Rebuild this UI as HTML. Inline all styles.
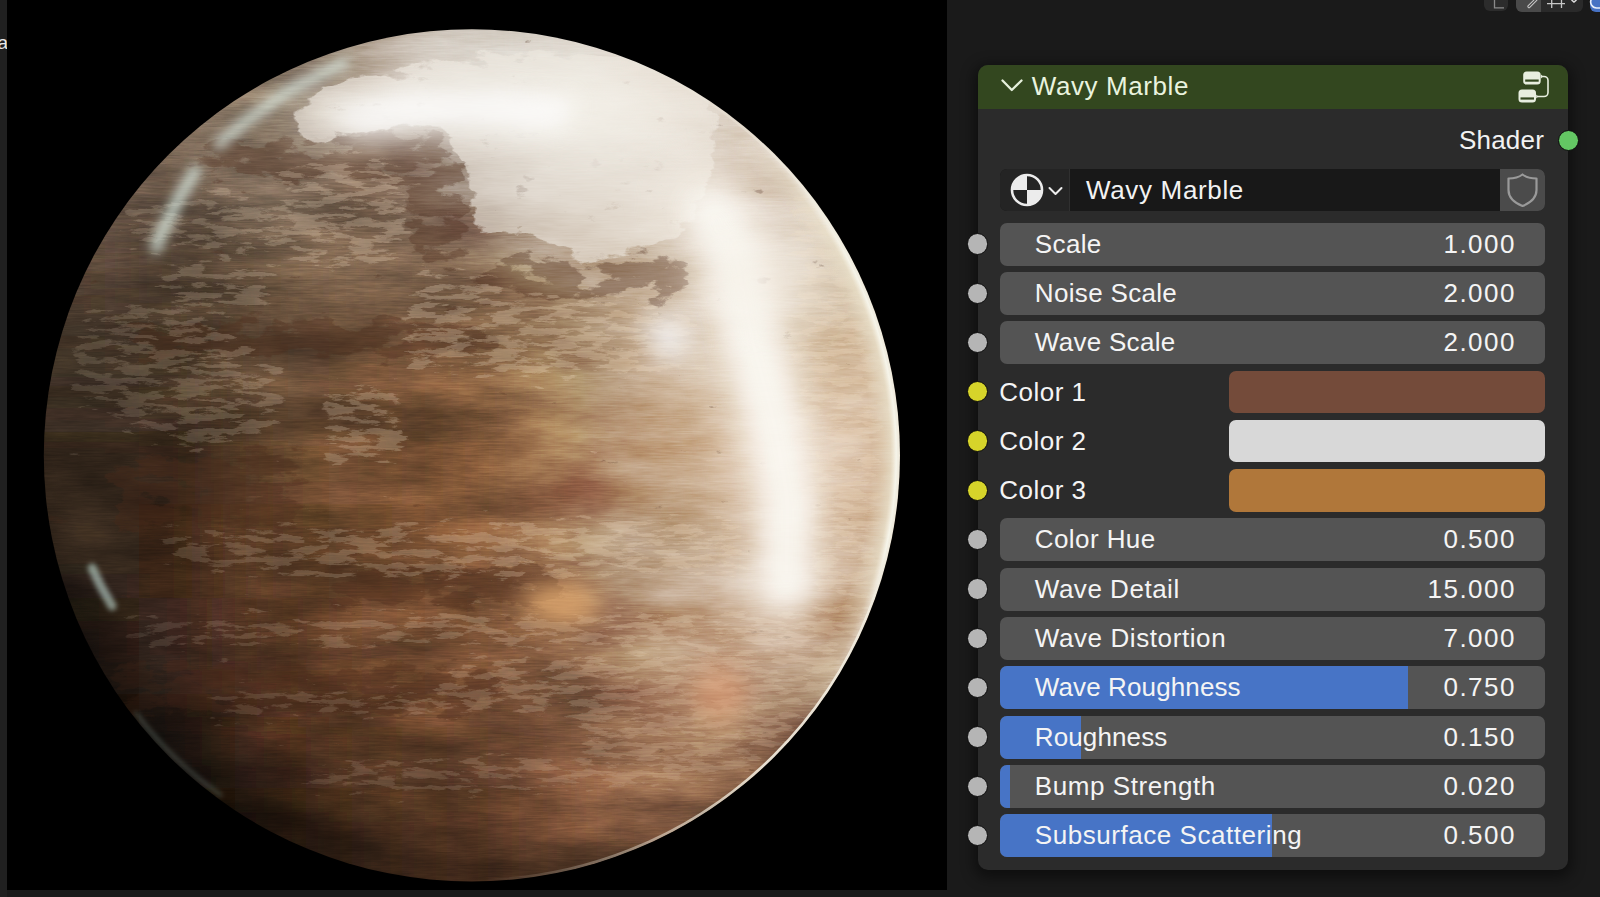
<!DOCTYPE html>
<html><head><meta charset="utf-8">
<style>
*{margin:0;padding:0;box-sizing:border-box}
html,body{width:1600px;height:897px;overflow:hidden;background:#1a1a1a;font-family:"Liberation Sans",sans-serif;color:#f2f2f2}
.abs{position:absolute}
#lstrip{position:absolute;left:0;top:0;width:7px;height:897px;background:#202020;overflow:hidden}
#lstrip span{position:absolute;left:-12px;top:33.4px;font-size:19px;color:#e8e8e8;line-height:20px}
#vp{position:absolute;left:7px;top:0;width:940px;height:890px;background:#000;overflow:hidden}
#node{position:absolute;left:978px;top:65px;width:590px;height:805px;border-radius:10px;background:#2b2b2b;box-shadow:0 4px 14px 4px rgba(0,0,0,0.45)}
#hdr{position:absolute;left:978px;top:65px;width:590px;height:44px;border-radius:10px 10px 0 0;background:#33471f}
.txt{position:absolute;font-size:26px;line-height:43px;white-space:nowrap}
.sock{position:absolute;left:967.1px;width:21.4px;height:21.4px;border-radius:50%;border:1.4px solid #0c0c0c}
.sock.g{background:#b5b5b5}
.sock.y{background:#d6d42a}
.sl{position:absolute;left:1000px;width:545px;height:43px;border-radius:7px;background:#545454;overflow:hidden}
.fill{position:absolute;left:0;top:0;height:43px;background:#4774c6}
.lb{position:absolute;left:34.8px;top:0;font-size:26px;line-height:43px;white-space:nowrap;color:#f4f4f4}
.vl{position:absolute;right:29.2px;top:0;font-size:26px;line-height:43px;white-space:nowrap;color:#f4f4f4;letter-spacing:1.45px}
.clb{position:absolute;left:999.3px;height:43px;font-size:26px;line-height:43px;white-space:nowrap;color:#f4f4f4}
.sw{position:absolute;left:1229px;width:316px;height:42.5px;border-radius:7px}
</style></head><body>
<div id="vp">
<svg width="940" height="890" style="position:absolute;left:0;top:0;filter:saturate(1.1)">
 <defs>
  <clipPath id="sph"><ellipse cx="464.9" cy="455.4" rx="428.1" ry="426.1"/></clipPath>
  <filter id="bl" filterUnits="userSpaceOnUse" x="-100" y="-100" width="1140" height="1090"><feGaussianBlur stdDeviation="36"/></filter>
  <filter id="b2" filterUnits="userSpaceOnUse" x="-50" y="-50" width="1040" height="990"><feGaussianBlur stdDeviation="2.5"/></filter>
  <filter id="b6" filterUnits="userSpaceOnUse" x="-50" y="-50" width="1040" height="990"><feGaussianBlur stdDeviation="6"/></filter>
  <filter id="b12" filterUnits="userSpaceOnUse" x="-50" y="-50" width="1040" height="990"><feGaussianBlur stdDeviation="12"/></filter>
  <filter id="b20" filterUnits="userSpaceOnUse" x="-50" y="-50" width="1040" height="990"><feGaussianBlur stdDeviation="20"/></filter>
  <filter id="mottleL" filterUnits="userSpaceOnUse" x="0" y="0" width="940" height="890" color-interpolation-filters="sRGB">
   <feGaussianBlur in="SourceAlpha" stdDeviation="8" result="m"/>
   <feTurbulence type="fractalNoise" baseFrequency="0.035 0.14" numOctaves="6" seed="7" result="n"/>
   <feColorMatrix in="n" type="matrix" values="0 0 0 0 0  0 0 0 0 0  0 0 0 0 0  1 0 0 0 0" result="na"/>
   <feComposite in="m" in2="na" operator="arithmetic" k1="0" k2="0.55" k3="1.5" k4="-1.0" result="s"/>
   <feComponentTransfer in="s" result="t"><feFuncA type="linear" slope="8" intercept="-2.0"/></feComponentTransfer>
   <feFlood flood-color="#eedcc4" flood-opacity="0.3"/>
   <feComposite in2="t" operator="in"/>
  </filter>
  <filter id="mottleD" filterUnits="userSpaceOnUse" x="0" y="0" width="940" height="890" color-interpolation-filters="sRGB">
   <feGaussianBlur in="SourceAlpha" stdDeviation="8" result="m"/>
   <feTurbulence type="fractalNoise" baseFrequency="0.03 0.07" numOctaves="6" seed="21" result="n"/>
   <feColorMatrix in="n" type="matrix" values="0 0 0 0 0  0 0 0 0 0  0 0 0 0 0  1 0 0 0 0" result="na"/>
   <feComposite in="m" in2="na" operator="arithmetic" k1="0" k2="0.7" k3="1.5" k4="-0.95" result="s"/>
   <feComponentTransfer in="s" result="t"><feFuncA type="linear" slope="8" intercept="-2.0"/></feComponentTransfer>
   <feFlood flood-color="#4a2c1e" flood-opacity="0.35"/>
   <feComposite in2="t" operator="in"/>
  </filter>
  <filter id="mottleW" filterUnits="userSpaceOnUse" x="0" y="0" width="940" height="890" color-interpolation-filters="sRGB">
   <feGaussianBlur in="SourceAlpha" stdDeviation="7" result="m"/>
   <feTurbulence type="fractalNoise" baseFrequency="0.03 0.07" numOctaves="6" seed="13" result="n"/>
   <feColorMatrix in="n" type="matrix" values="0 0 0 0 0  0 0 0 0 0  0 0 0 0 0  1 0 0 0 0" result="na"/>
   <feComposite in="m" in2="na" operator="arithmetic" k1="0" k2="1.0" k3="1.2" k4="-0.95" result="s"/>
   <feComponentTransfer in="s" result="t"><feFuncA type="linear" slope="8" intercept="-2.0"/></feComponentTransfer>
   <feFlood flood-color="#ece7df" flood-opacity="0.6"/>
   <feComposite in2="t" operator="in"/>
  </filter>
  <filter id="tex" filterUnits="userSpaceOnUse" x="0" y="0" width="940" height="890" color-interpolation-filters="sRGB">
   <feTurbulence type="fractalNoise" baseFrequency="0.008 0.025" numOctaves="5" seed="3" result="n"/>
   <feColorMatrix in="n" type="matrix" values="1 0 0 0 0  1 0 0 0 0  1 0 0 0 0  0 0 0 0 1" result="g"/>
   <feComponentTransfer in="g"><feFuncR type="linear" slope="1.8" intercept="-0.4"/><feFuncG type="linear" slope="1.8" intercept="-0.4"/><feFuncB type="linear" slope="1.8" intercept="-0.4"/></feComponentTransfer>
  </filter>
  <filter id="streak" filterUnits="userSpaceOnUse" x="0" y="0" width="940" height="890" color-interpolation-filters="sRGB">
   <feTurbulence type="fractalNoise" baseFrequency="0.04 0.6" numOctaves="3" seed="5" result="n"/>
   <feColorMatrix in="n" type="matrix" values="1 0 0 0 0  1 0 0 0 0  1 0 0 0 0  0 0 0 0 1" result="g"/>
   <feComponentTransfer in="g"><feFuncR type="linear" slope="1.5" intercept="-0.25"/><feFuncG type="linear" slope="1.5" intercept="-0.25"/><feFuncB type="linear" slope="1.5" intercept="-0.25"/></feComponentTransfer>
  </filter>
  <radialGradient id="limb" cx="0.5882978723404255" cy="0.3707865168539326" r="0.62" gradientUnits="objectBoundingBox">
   <stop offset="0.75" stop-color="#000" stop-opacity="0"/>
   <stop offset="0.9" stop-color="#000" stop-opacity="0.0"/>
   <stop offset="1" stop-color="#000" stop-opacity="0.35"/>
  </radialGradient>
  <radialGradient id="rim" cx="464.9" cy="455.4" r="427.2" gradientUnits="userSpaceOnUse">
   <stop offset="0.935" stop-color="#e6dcc8" stop-opacity="0"/>
   <stop offset="0.98" stop-color="#e8e0cc" stop-opacity="0.8"/>
   <stop offset="0.993" stop-color="#f6f4ea" stop-opacity="1"/>
   <stop offset="1" stop-color="#f0eee4" stop-opacity="1"/>
  </radialGradient>
  <radialGradient id="rimmask" cx="898" cy="400" r="340" gradientUnits="userSpaceOnUse">
   <stop offset="0.45" stop-color="#fff" stop-opacity="1"/>
   <stop offset="1" stop-color="#fff" stop-opacity="0"/>
  </radialGradient>
  <radialGradient id="thing" cx="853" cy="520" r="520" gradientUnits="userSpaceOnUse">
   <stop offset="0.5" stop-color="#fff" stop-opacity="1"/>
   <stop offset="1" stop-color="#fff" stop-opacity="0"/>
  </radialGradient>
  <mask id="thinm"><rect x="0" y="0" width="940" height="890" fill="url(#thing)"/></mask>
  <radialGradient id="litg" cx="673" cy="230" r="760" gradientUnits="userSpaceOnUse">
   <stop offset="0" stop-color="#fff" stop-opacity="1"/>
   <stop offset="0.45" stop-color="#fff" stop-opacity="0.85"/>
   <stop offset="1" stop-color="#fff" stop-opacity="0.25"/>
  </radialGradient>
  <mask id="litm"><rect x="0" y="0" width="940" height="890" fill="url(#litg)"/></mask>
  <mask id="rm"><rect x="0" y="0" width="940" height="890" fill="url(#rimmask)"/></mask>
 </defs>
 <g clip-path="url(#sph)">
  <g filter="url(#bl)"><rect x="-58" y="-66" width="96" height="96" fill="rgb(105, 88, 75)"/><rect x="38" y="-66" width="96" height="96" fill="rgb(105, 88, 75)"/><rect x="132" y="-66" width="96" height="96" fill="rgb(130, 115, 100)"/><rect x="228" y="-66" width="96" height="96" fill="rgb(130, 115, 100)"/><rect x="322" y="-66" width="96" height="96" fill="rgb(180, 165, 150)"/><rect x="418" y="-66" width="96" height="96" fill="rgb(205, 198, 188)"/><rect x="512" y="-66" width="96" height="96" fill="rgb(225, 220, 212)"/><rect x="608" y="-66" width="96" height="96" fill="rgb(220, 210, 198)"/><rect x="702" y="-66" width="96" height="96" fill="rgb(220, 210, 198)"/><rect x="798" y="-66" width="96" height="96" fill="rgb(215, 200, 185)"/><rect x="892" y="-66" width="96" height="96" fill="rgb(215, 200, 185)"/><rect x="-58" y="28" width="96" height="96" fill="rgb(105, 88, 75)"/><rect x="38" y="28" width="96" height="96" fill="rgb(105, 88, 75)"/><rect x="132" y="28" width="96" height="96" fill="rgb(130, 115, 100)"/><rect x="228" y="28" width="96" height="96" fill="rgb(130, 115, 100)"/><rect x="322" y="28" width="96" height="96" fill="rgb(180, 165, 150)"/><rect x="418" y="28" width="96" height="96" fill="rgb(205, 198, 188)"/><rect x="512" y="28" width="96" height="96" fill="rgb(225, 220, 212)"/><rect x="608" y="28" width="96" height="96" fill="rgb(220, 210, 198)"/><rect x="702" y="28" width="96" height="96" fill="rgb(220, 210, 198)"/><rect x="798" y="28" width="96" height="96" fill="rgb(215, 200, 185)"/><rect x="892" y="28" width="96" height="96" fill="rgb(215, 200, 185)"/><rect x="-58" y="124" width="96" height="96" fill="rgb(105, 88, 75)"/><rect x="38" y="124" width="96" height="96" fill="rgb(105, 88, 75)"/><rect x="132" y="124" width="96" height="96" fill="rgb(105, 88, 75)"/><rect x="228" y="124" width="96" height="96" fill="rgb(135, 118, 102)"/><rect x="322" y="124" width="96" height="96" fill="rgb(120, 95, 78)"/><rect x="418" y="124" width="96" height="96" fill="rgb(165, 150, 138)"/><rect x="512" y="124" width="96" height="96" fill="rgb(225, 220, 212)"/><rect x="608" y="124" width="96" height="96" fill="rgb(228, 222, 214)"/><rect x="702" y="124" width="96" height="96" fill="rgb(215, 200, 185)"/><rect x="798" y="124" width="96" height="96" fill="rgb(215, 200, 185)"/><rect x="892" y="124" width="96" height="96" fill="rgb(215, 200, 185)"/><rect x="-58" y="218" width="96" height="96" fill="rgb(70, 55, 45)"/><rect x="38" y="218" width="96" height="96" fill="rgb(70, 55, 45)"/><rect x="132" y="218" width="96" height="96" fill="rgb(88, 70, 55)"/><rect x="228" y="218" width="96" height="96" fill="rgb(98, 80, 62)"/><rect x="322" y="218" width="96" height="96" fill="rgb(120, 98, 80)"/><rect x="418" y="218" width="96" height="96" fill="rgb(135, 108, 85)"/><rect x="512" y="218" width="96" height="96" fill="rgb(165, 138, 110)"/><rect x="608" y="218" width="96" height="96" fill="rgb(205, 188, 168)"/><rect x="702" y="218" width="96" height="96" fill="rgb(225, 215, 202)"/><rect x="798" y="218" width="96" height="96" fill="rgb(215, 200, 180)"/><rect x="892" y="218" width="96" height="96" fill="rgb(215, 200, 180)"/><rect x="-58" y="314" width="96" height="96" fill="rgb(62, 48, 38)"/><rect x="38" y="314" width="96" height="96" fill="rgb(62, 48, 38)"/><rect x="132" y="314" width="96" height="96" fill="rgb(68, 52, 38)"/><rect x="228" y="314" width="96" height="96" fill="rgb(100, 78, 58)"/><rect x="322" y="314" width="96" height="96" fill="rgb(110, 80, 56)"/><rect x="418" y="314" width="96" height="96" fill="rgb(125, 92, 64)"/><rect x="512" y="314" width="96" height="96" fill="rgb(145, 115, 85)"/><rect x="608" y="314" width="96" height="96" fill="rgb(200, 175, 148)"/><rect x="702" y="314" width="96" height="96" fill="rgb(220, 205, 185)"/><rect x="798" y="314" width="96" height="96" fill="rgb(212, 190, 165)"/><rect x="892" y="314" width="96" height="96" fill="rgb(212, 190, 165)"/><rect x="-58" y="408" width="96" height="96" fill="rgb(50, 38, 28)"/><rect x="38" y="408" width="96" height="96" fill="rgb(50, 38, 28)"/><rect x="132" y="408" width="96" height="96" fill="rgb(52, 38, 26)"/><rect x="228" y="408" width="96" height="96" fill="rgb(95, 68, 46)"/><rect x="322" y="408" width="96" height="96" fill="rgb(108, 75, 48)"/><rect x="418" y="408" width="96" height="96" fill="rgb(122, 85, 55)"/><rect x="512" y="408" width="96" height="96" fill="rgb(160, 118, 84)"/><rect x="608" y="408" width="96" height="96" fill="rgb(195, 165, 135)"/><rect x="702" y="408" width="96" height="96" fill="rgb(222, 200, 178)"/><rect x="798" y="408" width="96" height="96" fill="rgb(210, 182, 155)"/><rect x="892" y="408" width="96" height="96" fill="rgb(210, 182, 155)"/><rect x="-58" y="504" width="96" height="96" fill="rgb(50, 37, 27)"/><rect x="38" y="504" width="96" height="96" fill="rgb(50, 37, 27)"/><rect x="132" y="504" width="96" height="96" fill="rgb(52, 36, 25)"/><rect x="228" y="504" width="96" height="96" fill="rgb(95, 64, 42)"/><rect x="322" y="504" width="96" height="96" fill="rgb(104, 70, 46)"/><rect x="418" y="504" width="96" height="96" fill="rgb(122, 85, 56)"/><rect x="512" y="504" width="96" height="96" fill="rgb(152, 114, 84)"/><rect x="608" y="504" width="96" height="96" fill="rgb(188, 166, 142)"/><rect x="702" y="504" width="96" height="96" fill="rgb(215, 195, 175)"/><rect x="798" y="504" width="96" height="96" fill="rgb(200, 170, 142)"/><rect x="892" y="504" width="96" height="96" fill="rgb(200, 170, 142)"/><rect x="-58" y="598" width="96" height="96" fill="rgb(40, 28, 20)"/><rect x="38" y="598" width="96" height="96" fill="rgb(40, 28, 20)"/><rect x="132" y="598" width="96" height="96" fill="rgb(52, 36, 26)"/><rect x="228" y="598" width="96" height="96" fill="rgb(90, 58, 38)"/><rect x="322" y="598" width="96" height="96" fill="rgb(108, 72, 48)"/><rect x="418" y="598" width="96" height="96" fill="rgb(115, 80, 54)"/><rect x="512" y="598" width="96" height="96" fill="rgb(138, 100, 72)"/><rect x="608" y="598" width="96" height="96" fill="rgb(180, 145, 115)"/><rect x="702" y="598" width="96" height="96" fill="rgb(195, 165, 140)"/><rect x="798" y="598" width="96" height="96" fill="rgb(175, 140, 112)"/><rect x="892" y="598" width="96" height="96" fill="rgb(175, 140, 112)"/><rect x="-58" y="694" width="96" height="96" fill="rgb(25, 18, 14)"/><rect x="38" y="694" width="96" height="96" fill="rgb(25, 18, 14)"/><rect x="132" y="694" width="96" height="96" fill="rgb(40, 27, 20)"/><rect x="228" y="694" width="96" height="96" fill="rgb(68, 44, 30)"/><rect x="322" y="694" width="96" height="96" fill="rgb(88, 58, 40)"/><rect x="418" y="694" width="96" height="96" fill="rgb(98, 66, 45)"/><rect x="512" y="694" width="96" height="96" fill="rgb(112, 78, 55)"/><rect x="608" y="694" width="96" height="96" fill="rgb(158, 118, 90)"/><rect x="702" y="694" width="96" height="96" fill="rgb(145, 108, 82)"/><rect x="798" y="694" width="96" height="96" fill="rgb(110, 80, 60)"/><rect x="892" y="694" width="96" height="96" fill="rgb(110, 80, 60)"/><rect x="-58" y="788" width="96" height="96" fill="rgb(25, 18, 14)"/><rect x="38" y="788" width="96" height="96" fill="rgb(25, 18, 14)"/><rect x="132" y="788" width="96" height="96" fill="rgb(30, 20, 15)"/><rect x="228" y="788" width="96" height="96" fill="rgb(50, 32, 22)"/><rect x="322" y="788" width="96" height="96" fill="rgb(75, 48, 32)"/><rect x="418" y="788" width="96" height="96" fill="rgb(95, 62, 42)"/><rect x="512" y="788" width="96" height="96" fill="rgb(110, 75, 52)"/><rect x="608" y="788" width="96" height="96" fill="rgb(128, 90, 66)"/><rect x="702" y="788" width="96" height="96" fill="rgb(95, 68, 50)"/><rect x="798" y="788" width="96" height="96" fill="rgb(110, 80, 60)"/><rect x="892" y="788" width="96" height="96" fill="rgb(110, 80, 60)"/><rect x="-58" y="884" width="96" height="96" fill="rgb(25, 18, 14)"/><rect x="38" y="884" width="96" height="96" fill="rgb(25, 18, 14)"/><rect x="132" y="884" width="96" height="96" fill="rgb(30, 20, 15)"/><rect x="228" y="884" width="96" height="96" fill="rgb(50, 32, 22)"/><rect x="322" y="884" width="96" height="96" fill="rgb(75, 48, 32)"/><rect x="418" y="884" width="96" height="96" fill="rgb(95, 62, 42)"/><rect x="512" y="884" width="96" height="96" fill="rgb(110, 75, 52)"/><rect x="608" y="884" width="96" height="96" fill="rgb(128, 90, 66)"/><rect x="702" y="884" width="96" height="96" fill="rgb(95, 68, 50)"/><rect x="798" y="884" width="96" height="96" fill="rgb(110, 80, 60)"/><rect x="892" y="884" width="96" height="96" fill="rgb(110, 80, 60)"/></g>
  <rect x="0" y="0" width="940" height="890" fill="#000" filter="url(#tex)" opacity="0.25" style="mix-blend-mode:overlay"/>
  <rect x="0" y="0" width="940" height="890" fill="#000" filter="url(#streak)" opacity="0.1" style="mix-blend-mode:overlay"/>
  <g filter="url(#mottleD)"><path d="M193.0 138.0 L440.0 131.0 L455.0 175.0 L293.0 185.0 L198.0 180.0 Z"/><path d="M393.0 170.0 L455.0 170.0 L463.0 262.0 L413.0 270.0 L398.0 230.0 Z"/><path d="M123.0 320.0 L493.0 318.0 L493.0 356.0 L123.0 360.0 Z"/><path d="M98.0 455.0 L303.0 450.0 L293.0 530.0 L113.0 532.0 Z"/><path d="M318.0 562.0 L553.0 562.0 L548.0 612.0 L323.0 610.0 Z"/><path d="M103.0 662.0 L493.0 668.0 L493.0 718.0 L113.0 716.0 Z"/><path d="M473.0 255.0 L683.0 255.0 L683.0 300.0 L473.0 300.0 Z"/></g>
  <g mask="url(#litm)"><g filter="url(#mottleL)"><path d="M273.0 165.0 L323.0 155.0 L393.0 158.0 L407.0 200.0 L398.0 260.0 L343.0 274.0 L283.0 262.0 L263.0 220.0 Z"/><path d="M193.0 187.0 L233.0 187.0 L233.0 220.0 L193.0 220.0 Z"/><path d="M410.0 267.0 L493.0 272.0 L493.0 317.0 L413.0 312.0 Z"/><path d="M153.0 262.0 L263.0 262.0 L273.0 310.0 L163.0 315.0 Z"/><path d="M73.0 310.0 L173.0 300.0 L283.0 370.0 L273.0 430.0 L193.0 455.0 L113.0 430.0 L63.0 400.0 Z"/><path d="M393.0 300.0 L553.0 292.0 L693.0 310.0 L683.0 380.0 L513.0 382.0 L398.0 372.0 Z"/><path d="M311.0 385.0 L393.0 380.0 L403.0 465.0 L318.0 470.0 Z"/><path d="M153.0 530.0 L393.0 522.0 L743.0 532.0 L738.0 575.0 L413.0 582.0 L163.0 572.0 Z"/><path d="M118.0 618.0 L473.0 610.0 L873.0 605.0 L873.0 645.0 L473.0 648.0 L118.0 650.0 Z"/><path d="M443.0 658.0 L873.0 645.0 L873.0 700.0 L593.0 705.0 L443.0 698.0 Z"/><path d="M783.0 160.0 L863.0 220.0 L883.0 420.0 L868.0 600.0 L808.0 600.0 L788.0 400.0 Z"/><path d="M563.0 715.0 L793.0 700.0 L808.0 770.0 L593.0 790.0 Z"/><path d="M113.0 200.0 L273.0 205.0 L263.0 255.0 L123.0 250.0 Z"/><path d="M193.0 688.0 L693.0 680.0 L693.0 712.0 L203.0 720.0 Z"/><path d="M293.0 760.0 L713.0 750.0 L693.0 790.0 L313.0 795.0 Z"/><path d="M473.0 520.0 L733.0 515.0 L733.0 545.0 L473.0 550.0 Z"/></g></g>
  <g filter="url(#mottleW)"><path d="M283.0 110.0 L323.0 80.0 L413.0 62.0 L513.0 50.0 L633.0 55.0 L693.0 75.0 L713.0 120.0 L705.0 180.0 L683.0 230.0 L633.0 255.0 L593.0 262.0 L568.0 262.0 L541.0 247.0 L520.0 231.0 L493.0 235.0 L470.0 237.0 L463.0 207.0 L457.0 170.0 L440.0 130.0 L397.0 127.0 L356.0 137.0 L313.0 142.0 L288.0 135.0 Z"/></g>
  
  <path filter="url(#b20)" d="M293.0 105.0 L353.0 80.0 L463.0 68.0 L593.0 72.0 L673.0 95.0 L683.0 130.0 L593.0 140.0 L473.0 135.0 L353.0 145.0 L293.0 140.0 Z" fill="#fbf8f2" opacity="0.5"/>
  <path filter="url(#b12)" d="M313.0 112.0 L393.0 90.0 L493.0 88.0 L573.0 100.0 L553.0 130.0 L453.0 128.0 L353.0 138.0 Z" fill="#ffffff" opacity="0.75"/>
  <path filter="url(#b6)" d="M338.0 62.0 L283.0 90.0 L238.0 122.0 L211.0 145.0" stroke="#e4f4ee" stroke-width="10" fill="none" opacity="0.8" stroke-linecap="round"/>
  <path filter="url(#b6)" d="M189.0 170.0 L171.0 200.0 L155.0 232.0 L149.0 248.0" stroke="#e0f2ea" stroke-width="11" fill="none" opacity="0.85" stroke-linecap="round"/>
  <path filter="url(#b20)" d="M698.0 200.0 L723.0 240.0 L743.0 340.0 L766.0 421.0 L782.0 501.0 L779.0 581.0 L771.0 605.0" stroke="#fbf7f0" stroke-width="80" fill="none" opacity="0.5" stroke-linecap="round"/>
  <path filter="url(#b12)" d="M705.0 215.0 L728.0 250.0 L745.0 340.0 L767.0 421.0 L781.0 501.0 L779.0 585.0" stroke="#fcfaf6" stroke-width="50" fill="none" opacity="0.85" stroke-linecap="round"/>
  <ellipse filter="url(#b20)" cx="758" cy="280" rx="60" ry="45" fill="#f4efe6" opacity="0.5"/>
  <ellipse filter="url(#b12)" cx="661" cy="338" rx="22" ry="24" fill="#f4f6fa" opacity="0.7"/>
  <ellipse filter="url(#b12)" cx="555" cy="604" rx="38" ry="20" fill="#e8b47a" opacity="0.75"/>
  <ellipse filter="url(#b12)" cx="713" cy="695" rx="28" ry="30" fill="#dba07c" opacity="0.6"/>
  <path filter="url(#b2)" d="M85.0 568.0 L93.0 585.0 L105.0 606.0" stroke="#cfe8e0" stroke-width="9" fill="none" opacity="0.6" stroke-linecap="round"/>
  <path filter="url(#b2)" d="M 128 712 Q 163 760 215 796" stroke="#a8c0b4" stroke-width="3" fill="none" opacity="0.55"/>

  <rect x="0" y="0" width="940" height="890" fill="url(#limb)"/>
  <circle cx="464.9" cy="455.4" r="427.2" fill="url(#rim)" mask="url(#rm)"/>
  <ellipse cx="464.9" cy="455.4" rx="426.90000000000003" ry="424.90000000000003" fill="none" stroke="#f2eee2" stroke-width="3" mask="url(#thinm)" opacity="0.9"/>
 </g>
</svg>
</div>
<div id="lstrip"><span>ca</span></div>
<!-- top right toolbar -->
<div class="abs" style="left:1484px;top:-10px;width:24px;height:21px;border-radius:6px;background:#2c2c2c"></div>
<svg class="abs" style="left:1484px;top:0" width="24" height="11"><path d="M10.5 0 V7.8 H20" fill="none" stroke="#8a8a8a" stroke-width="1.3"/></svg>
<div class="abs" style="left:1516px;top:-10px;width:67px;height:21.5px;border-radius:6px;background:#2a2a2a;overflow:hidden"><div style="width:25px;height:100%;background:#4a4a4a"></div></div>
<svg class="abs" style="left:1516px;top:0" width="67" height="12"><path d="M13 6.5 L20 -0.5" fill="none" stroke="#c8c8c8" stroke-width="3.2" stroke-linecap="round"/><path d="M13 6.5 L20 -0.5" fill="none" stroke="#4a4a4a" stroke-width="1.2" stroke-linecap="round"/><path d="M31 3.7 H49 M35.7 0 V8 M45.5 0 V8" fill="none" stroke="#c8c8c8" stroke-width="1.3"/><path d="M55.5 0 L58 2 L60.5 0" fill="none" stroke="#ddd" stroke-width="1.5"/></svg>
<div class="abs" style="left:1589.5px;top:-10px;width:20px;height:21.5px;border-radius:6px;background:#4772c4"></div>
<svg class="abs" style="left:1589px;top:0" width="11" height="12"><path d="M2.5 -1 A6 6 0 0 0 8 8 L11 8" fill="none" stroke="#e8eefa" stroke-width="1.6"/></svg>

<div id="node"></div>
<div id="hdr"></div>
<svg class="abs" style="left:1000px;top:78px" width="26" height="16"><path d="M2.5 2.5 L11.8 12 L21.5 2.5" fill="none" stroke="#e6f0dc" stroke-width="2.3" stroke-linecap="round" stroke-linejoin="round"/></svg>
<div class="txt" style="left:1031.8px;top:64.5px;color:#e9f3de;letter-spacing:0.59px">Wavy Marble</div>
<svg class="abs" style="left:1516px;top:68px" width="36" height="38">
 <rect x="7.2" y="3.6" width="17.5" height="13" rx="3.5" fill="#e8eedf"/>
 <rect x="9.2" y="11.5" width="13.5" height="2.2" fill="#33471f"/>
 <rect x="2.5" y="21.5" width="17.5" height="13" rx="3.5" fill="#e8eedf"/>
 <rect x="4.5" y="29.4" width="13.5" height="2.2" fill="#33471f"/>
 <path d="M25.5 8.5 H28 A4 4 0 0 1 32 12.5 V24.5 A4 4 0 0 1 28 28.5 H21" fill="none" stroke="#e8eedf" stroke-width="1.6"/>
 <path d="M25 6.5 L27 8.5 L25 10.5 Z M20.2 26.5 L22.2 28.5 L20.2 30.5Z" fill="#e8eedf"/>
</svg>
<div class="txt" style="left:1459px;top:118.5px;color:#f2f2f2;letter-spacing:0.2px">Shader</div>
<div class="sock" style="left:1557.5px;top:129.5px;background:#63c763"></div>

<!-- selector row -->
<div class="abs" style="left:1000px;top:169px;width:545px;height:42px;border-radius:7px;background:#181818;overflow:hidden">
 <div class="abs" style="left:0;top:0;width:70px;height:42px;background:#242424;border-right:1px solid #303030"></div>
 <div class="abs" style="left:500px;top:0;width:45px;height:42px;background:#4b4b4b"></div>
</div>
<svg class="abs" style="left:1008px;top:171px" width="62" height="38">
 <defs><clipPath id="mc"><circle cx="19" cy="19" r="14.5"/></clipPath></defs>
 <g clip-path="url(#mc)">
  <rect x="0" y="0" width="19" height="19" fill="#ececec"/>
  <rect x="19" y="0" width="19" height="19" fill="#242424"/>
  <rect x="0" y="19" width="19" height="19" fill="#242424"/>
  <rect x="19" y="19" width="19" height="19" fill="#ececec"/>
 </g>
 <path d="M19 4.5 V19 H4.8" fill="none" stroke="#ececec" stroke-width="0"/>
 <circle cx="19" cy="19" r="15" fill="none" stroke="#ececec" stroke-width="2.6"/>
 <path d="M41.5 17 L47.5 23 L53.5 17" fill="none" stroke="#ececec" stroke-width="2" stroke-linecap="round" stroke-linejoin="round"/>
</svg>
<div class="txt" style="left:1086px;top:168.5px;color:#f2f2f2;letter-spacing:0.66px">Wavy Marble</div>
<svg class="abs" style="left:1500px;top:169px" width="45" height="42"><path d="M22.5 5.5 C18 9 13 9.5 8.5 9.5 V21 C8.5 29 15 34 22.5 37 C30 34 36.5 29 36.5 21 V9.5 C32 9.5 27 9 22.5 5.5 Z" fill="none" stroke="#9a9a9a" stroke-width="2.2" stroke-linejoin="round"/></svg>
<div class="sock g" style="top:233.2px"></div>
<div class="sl" style="top:222.6px"><span class="lb" style="letter-spacing:0.37px">Scale</span><span class="vl">1.000</span></div>
<div class="sock g" style="top:282.5px"></div>
<div class="sl" style="top:271.9px"><span class="lb" style="letter-spacing:0.33px">Noise Scale</span><span class="vl">2.000</span></div>
<div class="sock g" style="top:331.8px"></div>
<div class="sl" style="top:321.2px"><span class="lb" style="letter-spacing:0.29px">Wave Scale</span><span class="vl">2.000</span></div>
<div class="sock y" style="top:381.1px"></div>
<div class="clb" style="top:370.5px;letter-spacing:0.48px">Color 1</div>
<div class="sw" style="top:370.5px;background:#744b3a"></div>
<div class="sock y" style="top:430.4px"></div>
<div class="clb" style="top:419.8px;letter-spacing:0.48px">Color 2</div>
<div class="sw" style="top:419.8px;background:#d8d8d8"></div>
<div class="sock y" style="top:479.7px"></div>
<div class="clb" style="top:469.1px;letter-spacing:0.48px">Color 3</div>
<div class="sw" style="top:469.1px;background:#b0773a"></div>
<div class="sock g" style="top:529.0px"></div>
<div class="sl" style="top:518.4px"><span class="lb" style="letter-spacing:0.42px">Color Hue</span><span class="vl">0.500</span></div>
<div class="sock g" style="top:578.3px"></div>
<div class="sl" style="top:567.7px"><span class="lb" style="letter-spacing:0.52px">Wave Detail</span><span class="vl">15.000</span></div>
<div class="sock g" style="top:627.6px"></div>
<div class="sl" style="top:617.0px"><span class="lb" style="letter-spacing:0.59px">Wave Distortion</span><span class="vl">7.000</span></div>
<div class="sock g" style="top:676.9px"></div>
<div class="sl" style="top:666.3px"><div class="fill" style="width:407.9px"></div><span class="lb" style="letter-spacing:0.12px">Wave Roughness</span><span class="vl">0.750</span></div>
<div class="sock g" style="top:726.2px"></div>
<div class="sl" style="top:715.6px"><div class="fill" style="width:81.0px"></div><span class="lb" style="letter-spacing:0.12px">Roughness</span><span class="vl">0.150</span></div>
<div class="sock g" style="top:775.5px"></div>
<div class="sl" style="top:764.9px"><div class="fill" style="width:10.1px"></div><span class="lb" style="letter-spacing:0.58px">Bump Strength</span><span class="vl">0.020</span></div>
<div class="sock g" style="top:824.8px"></div>
<div class="sl" style="top:814.2px"><div class="fill" style="width:271.7px"></div><span class="lb" style="letter-spacing:0.55px">Subsurface Scattering</span><span class="vl">0.500</span></div>
</body></html>
